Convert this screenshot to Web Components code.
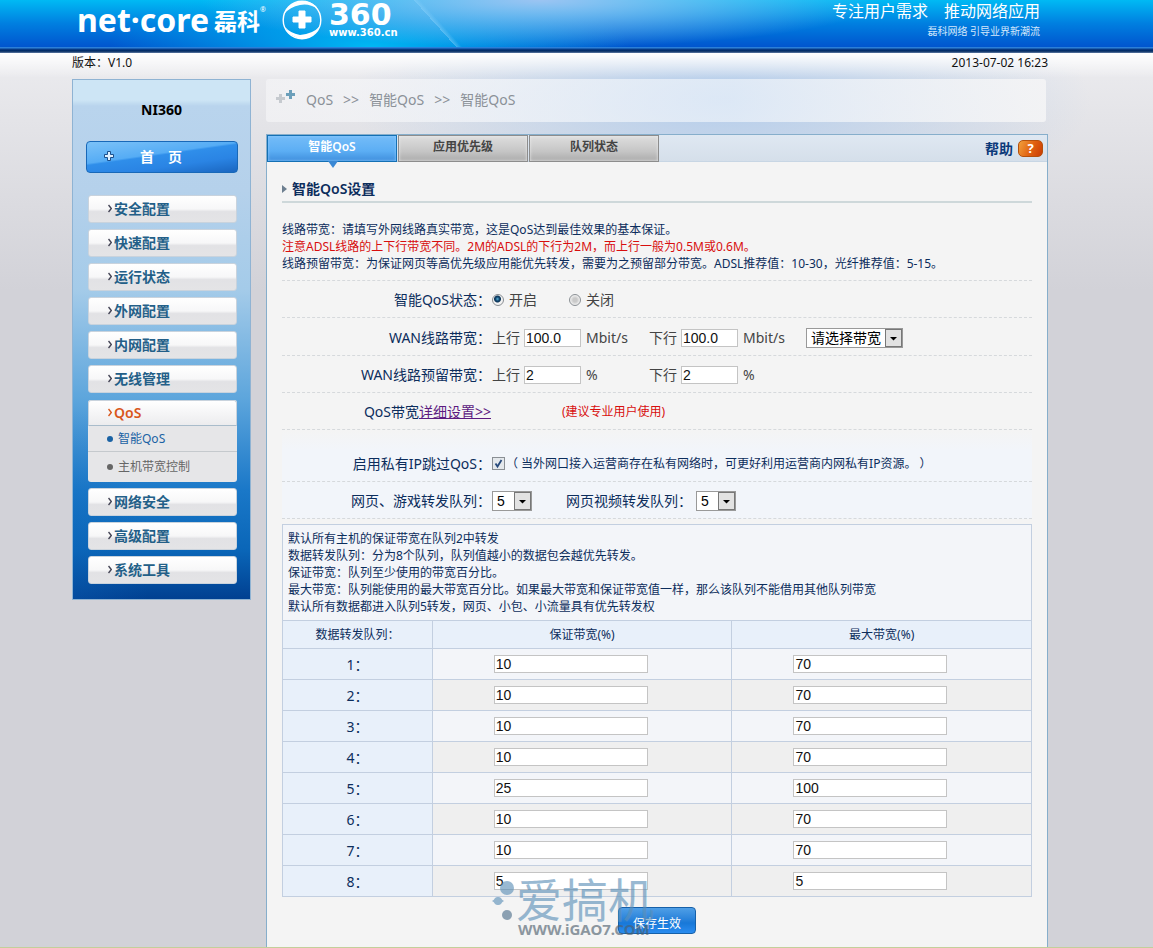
<!DOCTYPE html>
<html lang="zh-CN">
<head>
<meta charset="utf-8">
<title>NI360 - 智能QoS</title>
<style>
  html { background: #d2d2d8; }
  body { margin: 0; font-family: "Noto Sans", "Noto Sans CJK SC", sans-serif; font-size: 12px; line-height: 17px; color: #0c2d5c; }
</style>
</head>
<body>
<router-page>
  <site-header slot="header"></site-header>
  <status-bar slot="status" version="版本：V1.0" time="2013-07-02 16:23"></status-bar>
  <side-bar slot="side" device="NI360">
    <menu-item>安全配置</menu-item>
    <menu-item>快速配置</menu-item>
    <menu-item>运行状态</menu-item>
    <menu-item>外网配置</menu-item>
    <menu-item>内网配置</menu-item>
    <menu-item>无线管理</menu-item>
    <menu-item open>QoS
      <sub-item slot="sub" active>智能QoS</sub-item>
      <sub-item slot="sub">主机带宽控制</sub-item>
    </menu-item>
    <menu-item>网络安全</menu-item>
    <menu-item>高级配置</menu-item>
    <menu-item>系统工具</menu-item>
  </side-bar>
  <bread-crumb path="QoS|智能QoS|智能QoS"></bread-crumb>
  <tab-panel>
    <tab-button slot="tab" active>智能QoS</tab-button>
    <tab-button slot="tab">应用优先级</tab-button>
    <tab-button slot="tab">队列状态</tab-button>
    <section-title>智能QoS设置</section-title>
    <qos-form></qos-form>
  </tab-panel>
</router-page>

<script>
const define = (name, html, setup) => {
  const tpl = document.createElement('template');
  tpl.innerHTML = html;
  customElements.define(name, class extends HTMLElement {
    constructor() {
      super();
      this.attachShadow({ mode: 'open' }).append(tpl.content.cloneNode(true));
    }
    connectedCallback() {
      if (setup && !this.ready) { this.ready = true; setup(this, this.shadowRoot); }
    }
  });
};

define('router-page', `
<style>
  :host { display: flex; flex-direction: column; min-height: 100vh; box-sizing: border-box; border-bottom: 1px solid #c3cf9a;
    background:
      linear-gradient(to bottom, #fff 53px, #ffffff00 78px),
      radial-gradient(ellipse 370px 130px at 720px 100px, #b4cdeb, #b4cdeb00),
      linear-gradient(to bottom, #ececef 53px, #e4e4e8 120px, #d2d2d8 290px); }
  .wrap { flex: 1; display: flex; flex-direction: column; padding: 0 105px 0 72px; }
  .cols { flex: 1; display: flex; gap: 15px; align-items: stretch; }
  main { flex: 1; min-width: 0; display: flex; flex-direction: column; gap: 12px; }
</style>
<slot name="header"></slot>
<div class="wrap">
  <slot name="status"></slot>
  <div class="cols"><slot name="side"></slot><main><slot></slot></main></div>
</div>`);

define('site-header', `
<style>
  :host { display: block; color: #fff; }
  header { display: flex; height: 47px; overflow: hidden; padding: 0 113px 0 77px; box-sizing: border-box;
    background:
      linear-gradient(48deg, #ffffff00 50%, #8fd4fb77 50%, #ffffff00 54%) 380px 0 / 110px 47px no-repeat,
      radial-gradient(ellipse 340px 48px at 540px 0, #9cc4f2, #6db4ee00),
      radial-gradient(ellipse 260px 70px at 370px 47px, #00b8f4, #00b4f000),
      linear-gradient(to bottom, #00baf4, #007fe0 50%, #0055ce); }
  .rule { height: 6px; background: linear-gradient(to bottom, #2a7fd8 1px, #0a3f8c 2px, #00285e 4px, #5f7ba4 6px); }
  .brand { display: flex; align-items: center; height: 40px; }
  .nc { font: bold 32px/40px "Noto Sans", sans-serif; }
  .cn { font: bold 23px/40px "Noto Sans CJK SC", sans-serif; margin-left: 5px; }
  .r { font-size: 7px; line-height: 8px; align-self: flex-start; margin-top: 6px; }
  svg { display: block; margin: 0 7px 0 16px; flex: none; }
  .q { display: flex; flex-direction: column; font-family: "DejaVu Sans", sans-serif; font-weight: bold; }
  .q b { font-size: 30px; line-height: 26px; }
  .q span { font-size: 10px; line-height: 10px; }
  .slogan { margin-left: auto; text-align: right; }
  p { margin: 0; }
  .a { font-size: 16px; line-height: 22px; }
  .b { font-size: 10px; line-height: 18px; color: #d5e8fb; }
</style>
<header>
  <div class="brand">
    <span class="nc">net·core</span><span class="cn">磊科</span><span class="r">®</span>
    <svg width="40" height="40" viewBox="0 0 40 40" aria-hidden="true">
      <circle cx="20" cy="20" r="18.8" fill="none" stroke="#fff" stroke-width="1.4"/>
      <path d="M2 14Q7 2 20 1Q31 1 36 9Q27 3 18 5Q8 7 2 14Z" fill="#fff"/>
      <path d="M38 26Q33 38 20 39Q7 37 3 27Q8 33 18 35Q31 34 38 26Z" fill="#fff"/>
      <path d="M17 11h6v6h6v5h-6v6h-6v-6h-6v-5h6z" fill="#fff" stroke="#fff" stroke-linejoin="round"/>
    </svg>
    <span class="q"><b>360</b><span>www.360.cn</span></span>
  </div>
  <div class="slogan"><p class="a">专注用户需求　推动网络应用</p><p class="b">磊科网络 引导业界新潮流</p></div>
</header>
<div class="rule"></div>`);

define('status-bar', `
<style>
  :host { display: flex; justify-content: space-between; color: #111; line-height: 18px; padding: 1px 0 7px; }
</style>
<span id="v"></span><time id="t"></time>`, (el, root) => {
  root.getElementById('v').textContent = el.getAttribute('version');
  root.getElementById('t').textContent = el.getAttribute('time');
});

define('side-bar', `
<style>
  :host { display: block; width: 179px; box-sizing: border-box; align-self: flex-start; border: 1px solid #8fb3d3; padding: 18px 13px 15px;
    background:
      radial-gradient(ellipse 75px 190px at 0 100%, #0d62b855, #0d62b800),
      linear-gradient(to bottom, #cde5f5 0, #cde5f5 20px, #b9d4ed 26px, #b5d1eb 110px, #a4cbe9 210px, #5ca5dc 320px, #1a78c8 410px, #0a66b8 470px, #003f90 520px); }
  h2 { margin: 0 0 19px; font-size: 14px; line-height: 24px; text-align: center; color: #000; }
  button { display: flex; align-items: center; width: 152px; height: 32px; padding: 0 0 3px 16px; margin: 0 0 22px; gap: 25px;
    border: 1px solid #1868b8; border-radius: 4px; color: #fff; font: bold 14px/20px "Noto Sans CJK SC", sans-serif;
    background: linear-gradient(172deg, #7cc2f8 0, #55acf5 42%, #2f8eea 46%, #2a84e4 70%, #1a66c0); }
  nav { display: flex; flex-direction: column; gap: 6px; padding: 0 0 0 2px; }
</style>
<h2></h2>
<button type="button">
  <svg width="12" height="12" viewBox="0 0 12 12" aria-hidden="true"><path d="M4.500 1.500h3v3h3v3h-3v3h-3v-3h-3v-3h3z" fill="#dff0ff" stroke="#1b4f8c"/></svg>
  <span>首　页</span>
</button>
<nav><slot></slot></nav>`, (el, root) => {
  root.querySelector('h2').textContent = el.getAttribute('device');
});

define('menu-item', `
<style>
  :host { display: block; width: 149px; box-sizing: border-box; color: #235f88; }
  a { display: flex; align-items: center; height: 28px; box-sizing: border-box; gap: 2px; padding: 0 0 1px 19px; border: 1px solid #c9d3dd; border-radius: 3px; text-decoration: none;
    color: inherit; font-size: 14px; line-height: 20px; font-weight: 600; background: linear-gradient(to bottom, #fff, #f7f7f8 50%, #e2e2e5 60%, #e4e4e6); }
  svg { color: #445; flex: none; }
  :host([open]) { color: #d9571c; background: #e6e6e8; border-radius: 3px; margin: 1px 0 0; }
  :host([open]) svg { color: #d9571c; }
  :host([open]) a { height: 26px; border-radius: 3px 3px 0 0; background: linear-gradient(to bottom, #fff, #ececee); border-bottom-color: #a9bccb; }
</style>
<a href="#"><svg width="4" height="9" viewBox="0 0 4 9" aria-hidden="true"><path d="M.5 1L3.300 4.500L.5 8" fill="none" stroke="currentColor" stroke-width="1.400"/></svg><span><slot></slot></span></a>
<slot name="sub"></slot>`);

define('sub-item', `
<style>
  :host { display: block; border-bottom: 1px solid #c5c9cd; color: #666; font-weight: normal; }
  :host(:last-of-type) { border-bottom: 0; padding: 2px 0 3px; }
  :host([active]) { color: #1a62a4; }
  a { display: flex; align-items: center; gap: 5px; height: 25px; padding-left: 19px; color: inherit; text-decoration: none; font-size: 12px; }
  i { width: 6px; height: 6px; border-radius: 3px; background: currentColor; }
</style>
<a href="#"><i></i><slot></slot></a>`);

define('bread-crumb', `
<style>
  :host { display: flex; align-items: center; height: 43px; box-sizing: border-box; gap: 10px; padding: 0 0 2px 10px; margin-right: 2px; border-radius: 3px; font-size: 14px; color: #8b9198;
    background: linear-gradient(to right, #f5f5f7aa, #f6f8fbaa 30%, #f0f5fbaa 60%, #f5f5f6dd); }
  svg { margin: -6px 1px 0 0; }
</style>
<svg width="19" height="16" viewBox="0 0 19 16" aria-hidden="true"><path d="M3 5h3v3h3v3H6v3H3v-3H0V8h3z" fill="#c6cacf"/><path d="M13 1h3v3h3v3h-3v3h-3V7h-3V4h3z" fill="#6c9fba"/></svg>`,
(el, root) => {
  el.getAttribute('path').split('|').forEach((t, i) => {
    for (const s of i ? ['>>', t] : [t]) {
      const span = document.createElement('span');
      span.textContent = s;
      root.append(span);
    }
  });
});

define('tab-panel', `
<style>
  :host { flex: 1; display: flex; flex-direction: column; box-sizing: border-box; border: 1px solid #86aecb; border-bottom: 0; background: #f4f4f4; }
  .bar { display: flex; gap: 1px; height: 27px; background: linear-gradient(to bottom, #dfe8f2, #d5dfea); border-bottom: 1px solid #c8d6e4; box-sizing: border-box; }
  .help { margin-left: auto; display: flex; align-items: center; gap: 5px; padding-right: 4px; color: #0c3a7a; font-size: 14px; font-weight: 600; text-decoration: none; }
  .help i { width: 23px; height: 15px; border: 1px solid #b5500c; border-radius: 5px; font: bold 13px/15px "Noto Sans", sans-serif; text-align: center; color: #fff; background: linear-gradient(115deg, #f2a03c, #e06010 55%, #c93c04); }
  .body { flex: 1; padding: 15px 15px 0; }
</style>
<div class="bar"><slot name="tab"></slot><a class="help" href="#">帮助<i>?</i></a></div>
<div class="body"><slot></slot></div>`);

define('tab-button', `
<style>
  :host { display: block; position: relative; width: 130px; height: 27px; color: #444; }
  button { width: 100%; height: 100%; padding: 0 0 5px; font: 600 12px/17px "Noto Sans", "Noto Sans CJK SC", sans-serif; color: inherit;
    border: 1px solid #8d8d8d; background: linear-gradient(to bottom, #dedede, #c6c6c6 60%, #acacac); box-shadow: inset 0 0 3px #eee; }
  :host([active]) { color: #fff; }
  :host([active]) button { border-color: #1470b4; background: linear-gradient(to bottom, #74bcf8, #5caef4 60%, #3f8fdd); box-shadow: inset 0 0 3px #8fcbff; }
  i { display: none; position: absolute; left: 50%; top: 26px; margin-left: -4px; border: solid transparent; border-width: 7px 5px 0; border-top-color: #3a88d4; }
  :host([active]) i { display: block; }
</style>
<button type="button"><slot></slot></button><i></i>`);

define('section-title', `
<style>
  :host { display: block; border-bottom: 2px solid #ced8da; margin-bottom: 18px; }
  h1 { display: flex; align-items: center; gap: 5px; margin: 0; font-size: 14px; line-height: 24px; font-weight: 600; color: #0c2d5c; }
</style>
<h1><svg width="5" height="8" viewBox="0 0 5 8" aria-hidden="true"><path d="M0 0l5 4-5 4z" fill="#6d7f90"/></svg><slot></slot></h1>`);

define('form-row', `
<style>
  :host { display: flex; align-items: center; height: 34px; padding-top: 2px; border-bottom: 1px dashed #d6d9dc; font-size: 14px; line-height: 20px; }
  .label { width: 209px; text-align: right; white-space: nowrap; flex: none; }
  .field { display: flex; align-items: center; color: #444; white-space: nowrap; padding-left: 1px; }
</style>
<div class="label"><slot name="label"></slot></div><div class="field"><slot></slot></div>`);

define('qos-form', `
<style>
  :host { display: block; }
  p { margin: 0; }
  .red { color: #d80e0e; }
  .intro { padding-bottom: 8px; border-bottom: 1px dashed #d6d9dc; }
  .low { padding-top: 14px; background: linear-gradient(to bottom, #f4f4f4, #f2f5fa 20px); }
  .tall { height: 35px; }
  input[type=text] { width: 57px; height: 18px; box-sizing: border-box; border: 1px solid #c4c4c4; padding: 0 0 0 1px; background: #fff; font: 14px/16px "Liberation Sans", sans-serif; color: #111; }
  .up, .down { width: 32px; }
  .unit { width: 63px; padding-left: 5px; box-sizing: content-box; }
  .unit2 { width: 63px; padding-left: 5px; }
  input[type=radio], input[type=checkbox] { appearance: none; width: 12px; height: 12px; margin: 0 5px 0 0; box-sizing: border-box; border: 1px solid #8a8f94; background: #e9e9e9; }
  input[type=radio] { border-radius: 6px; background: radial-gradient(circle, #c9c9c9 2px, #f2f2f2 5px); }
  input[type=radio]:checked { background: radial-gradient(circle at 45% 40%, #59b3d8 0, #12456e 2px, #0d3558 3px, #f2f2f2 4px); }
  input[type=checkbox] { width: 13px; height: 13px; margin-right: 1px; background: url("data:image/svg+xml,%3Csvg xmlns='http://www.w3.org/2000/svg' viewBox='0 0 11 11'%3E%3Cpath d='M2.500 5.500l2 3L8.500 2' fill='none' stroke='%23284a7c' stroke-width='1.800'/%3E%3C/svg%3E") #e4e8ec; }
  .on { width: 60px; }
  a { color: #5b1a80; }
  .note { font-size: 12px; color: #0c2d5c; }
  .tip { padding-left: 70px; font-size: 12px; color: #d80e0e; }
  .video { padding-left: 34px; width: 130px; color: #0c2d5c; }
  select { appearance: none; box-sizing: border-box; width: 40px; height: 20px; margin: 0; border: 1px solid #999; border-radius: 0; padding: 0 0 0 4px; color: #000;
    font: 14px/18px "Liberation Sans", "Noto Sans CJK SC", sans-serif;
    background: url("data:image/svg+xml,%3Csvg xmlns='http://www.w3.org/2000/svg' width='17' height='18'%3E%3Crect x='.5' y='.5' width='16' height='17' fill='%23e2e2e2' stroke='%23777'/%3E%3Cpath d='M5 8h7L8.500 11.500z'/%3E%3C/svg%3E") right center no-repeat #fff; }
  .wide { width: 97px; }
  .box { border: 1px solid #c3cfe0; background: #f3f5f9; padding: 5px 5px 5px; margin-top: 5px; border-bottom: 0; }
  table { width: 100%; border-collapse: collapse; table-layout: fixed; }
  th, td { border: 1px solid #c3cfe0; padding: 0; }
  th { background: #e8f0fa; font-weight: normal; text-align: center; }
  thead th { height: 27px; }
  tbody th { font-size: 14px; height: 30px; }
  tbody tr { background: #f3f5f9; }
  tbody tr:nth-child(even) { background: #efefef; }
  td input[type=text] { display: block; width: 154px; margin-left: 61px; }
  .act { position: relative; display: flex; justify-content: center; padding: 10px 0 12px; }
  .save { width: 78px; height: 27px; border: 1px solid #1660a8; border-radius: 4px; padding: 3px 0 0; color: #fff; font: 12px/17px "Noto Sans CJK SC", sans-serif;
    background: linear-gradient(to bottom, #4f9fe6, #2e86dc 40%, #1878d8 60%, #2a8cf0); }
  .mark { position: absolute; left: 28%; top: -24px; display: flex; width: 170px; opacity: .62; pointer-events: none; color: #5b8fb8; }
  .mark svg { flex: none; }
  .mark b { display: block; font: 400 46px/48px "Noto Sans CJK SC", sans-serif; white-space: nowrap; }
  .mark span { display: block; font: bold 15px/16px "Noto Sans", sans-serif; color: #4c5d6c; padding-left: 2px; }
</style>
<div class="intro">
  <p>线路带宽：请填写外网线路真实带宽，这是QoS达到最佳效果的基本保证。</p>
  <p class="red">注意ADSL线路的上下行带宽不同。2M的ADSL的下行为2M，而上行一般为0.5M或0.6M。</p>
  <p>线路预留带宽：为保证网页等高优先级应用能优先转发，需要为之预留部分带宽。ADSL推荐值：10-30，光纤推荐值：5-15。</p>
</div>
<form-row><span slot="label">智能QoS状态：</span>
  <input type="radio" name="st" id="on" checked><label class="on" for="on">开启</label>
  <input type="radio" name="st" id="off"><label for="off">关闭</label>
</form-row>
<form-row class="tall"><span slot="label">WAN线路带宽：</span>
  <label class="up" for="u1">上行</label><input type="text" id="u1" value="100.0"><span class="unit">Mbit/s</span>
  <label class="down" for="d1">下行</label><input type="text" id="d1" value="100.0"><span class="unit2">Mbit/s</span>
  <select class="wide" aria-label="带宽"><option>请选择带宽</option></select>
</form-row>
<form-row><span slot="label">WAN线路预留带宽：</span>
  <label class="up" for="u2">上行</label><input type="text" id="u2" value="2"><span class="unit">%</span>
  <label class="down" for="d2">下行</label><input type="text" id="d2" value="2"><span class="unit2">%</span>
</form-row>
<form-row><span slot="label">QoS带宽<a href="#">详细设置&gt;&gt;</a></span><span class="tip">(建议专业用户使用)</span></form-row>
<div class="low">
  <form-row class="tall"><label slot="label" for="ip">启用私有IP跳过QoS：</label>
    <input type="checkbox" id="ip" checked><span class="note">（ 当外网口接入运营商存在私有网络时，可更好利用运营商内网私有IP资源。 ）</span>
  </form-row>
  <form-row><label slot="label" for="q1">网页、游戏转发队列：</label>
    <select id="q1"><option>5</option></select>
    <label class="video" for="q2">网页视频转发队列：</label><select id="q2"><option>5</option></select>
  </form-row>
</div>
<div class="box">
  <p>默认所有主机的保证带宽在队列2中转发</p>
  <p>数据转发队列：分为8个队列，队列值越小的数据包会越优先转发。</p>
  <p>保证带宽：队列至少使用的带宽百分比。</p>
  <p>最大带宽：队列能使用的最大带宽百分比。如果最大带宽和保证带宽值一样，那么该队列不能借用其他队列带宽</p>
  <p>默认所有数据都进入队列5转发，网页、小包、小流量具有优先转发权</p>
</div>
<table>
  <colgroup><col style="width:20%"><col style="width:40%"><col style="width:40%"></colgroup>
  <thead><tr><th>数据转发队列：</th><th>保证带宽(%)</th><th>最大带宽(%)</th></tr></thead>
  <tbody></tbody>
</table>
<div class="act">
  <button class="save" type="button">保存生效</button>
  <div class="mark" aria-hidden="true">
    <svg width="24" height="50" viewBox="0 0 24 50"><g fill="#5b8fb8"><circle cx="15" cy="15" r="7"/><circle cx="6" cy="28" r="4"/><path d="M0 28l6-4v8zM12 28l-6-4v8z"/></g><circle cx="15" cy="42" r="5" fill="#4c6d8a"/></svg>
    <div><b>爱搞机</b><span>WWW.iGAO7.COM</span></div>
  </div>
</div>`, (el, root) => {
  const tbody = root.querySelector('tbody');
  [[10, 70], [10, 70], [10, 70], [10, 70], [25, 100], [10, 70], [10, 70], [5, 5]].forEach(([min, max], i) => {
    const n = i + 1;
    tbody.insertAdjacentHTML('beforeend', `<tr><th scope="row">${n}：</th>
      <td><input type="text" value="${min}" aria-label="队列${n} 保证带宽"></td>
      <td><input type="text" value="${max}" aria-label="队列${n} 最大带宽"></td></tr>`);
  });
});
</script>
</body>
</html>
